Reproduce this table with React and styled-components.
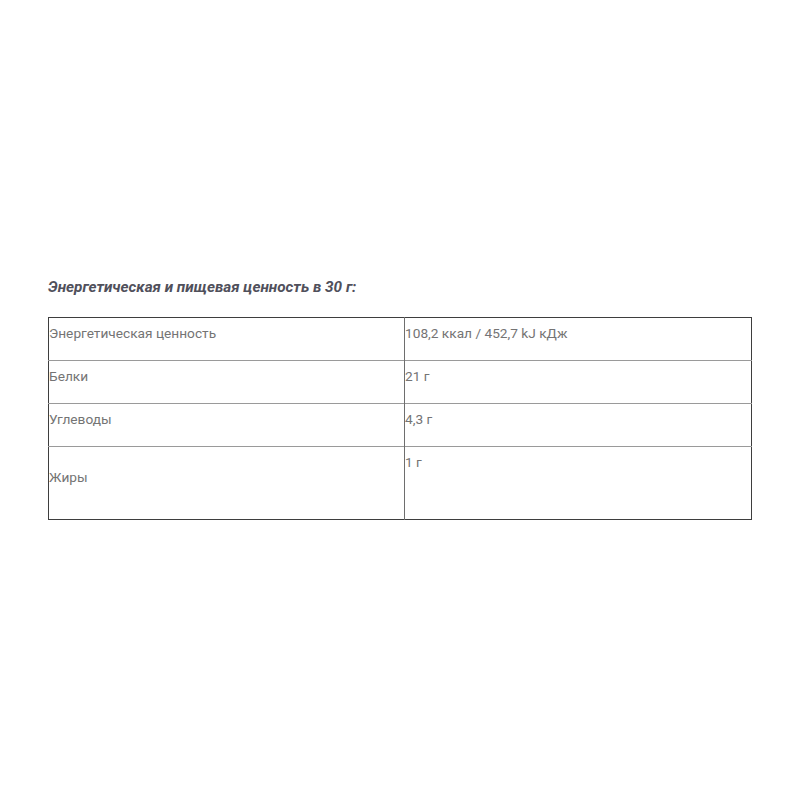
import styled, { createGlobalStyle } from "styled-components";

const GlobalStyle = createGlobalStyle`
  body {
    margin: 0;
    background: #fff;
    font-family: Roboto, "Liberation Sans", sans-serif;
  }
`;

const Page = styled.div`
  display: flex;
  flex-direction: column;
  gap: 20px;
  padding: 277px 48px 0 48px;
  height: 800px;
  box-sizing: border-box;
`;

const Title = styled.h4`
  margin: 0;
  font-size: 15.3px;
  line-height: 20px;
  font-style: italic;
  font-weight: 700;
  color: #50505b;
`;

const Table = styled.table`
  width: 704px;
  border-collapse: collapse;
  table-layout: fixed;
  border: 1px solid #3e3e3e;
`;

const Row = styled.tr`
  border-top: 1px solid #9a9a9a;

  &:first-child {
    border-top: none;
  }
`;

const Cell = styled.td`
  width: ${(p) => (p.$first ? "355px" : "auto")};
  vertical-align: middle;
  padding: 5px 0 ${(p) => (p.$tall ? 47 : 17)}px 0;
  font-size: 13.7px;
  line-height: 20px;
  color: #747474;
  white-space: nowrap;

  & + & {
    border-left: 1px solid #6e6e6e;
  }
`;

const ROWS = [
  ["Энергетическая ценность", "108,2 ккал / 452,7 kJ кДж"],
  ["Белки", "21 г"],
  ["Углеводы", "4,3 г"],
  ["Жиры", "1 г", true],
];

const App = () => {
  return (
    <Page>
      <GlobalStyle />
      <Title>Энергетическая и пищевая ценность в 30 г:</Title>
      <Table>
        <tbody>
          {ROWS.map(([name, value, tall]) => (
            <Row key={name}>
              <Cell $first>{name}</Cell>
              <Cell $tall={tall}>{value}</Cell>
            </Row>
          ))}
        </tbody>
      </Table>
    </Page>
  );
};

export default App;
